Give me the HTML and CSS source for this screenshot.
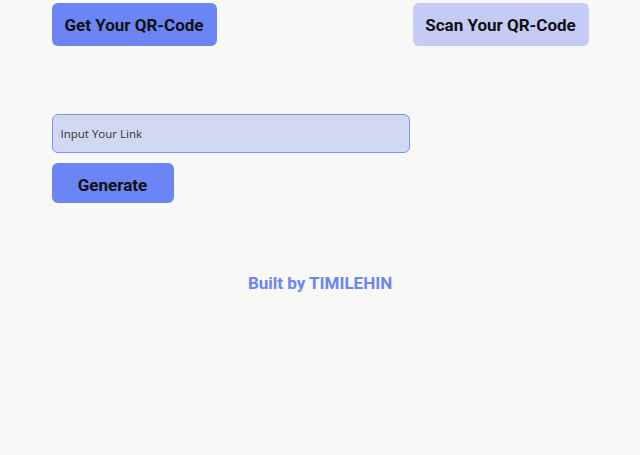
FILE: index.html
```html
<!DOCTYPE html>
<html>
<head>
<meta charset="utf-8">
<link rel="stylesheet" href="styles.css">
</head>
<body>
<div class="page">
  <nav class="tabs">
    <button class="tab tab-active">Get Your QR-Code</button>
    <button class="tab tab-light">Scan Your QR-Code</button>
  </nav>
  <section class="form">
    <input class="link-input" type="text" placeholder="Input Your Link">
    <button class="generate">Generate</button>
  </section>
  <footer class="credit">Built by TIMILEHIN</footer>
</div>
</body>
</html>
```
FILE: styles.css
```css
html, body {
  margin: 0;
  padding: 0;
  background: #f8f8f7;
  font-family: Roboto, "Liberation Sans", sans-serif;
}
.page {
  width: 537px;
  margin: 0 auto;
  padding-top: 3px;
}
.tabs {
  display: flex;
  justify-content: space-between;
}
.tab {
  height: 43px;
  border: none;
  border-radius: 6px;
  font-family: Roboto, sans-serif;
  font-weight: 700;
  font-size: 17px;
  color: #111;
  padding: 0;
}
.tab-active { background: #6b85f5; width: 165px; }
.tab-light { background: #c4cbf5; width: 176px; }
.form {
  display: flex;
  flex-direction: column;
  align-items: flex-start;
  margin-top: 68px;
}
.link-input {
  box-sizing: border-box;
  width: 358px;
  height: 39px;
  background: #d1d9f2;
  border: 1px solid #7a94f0;
  border-radius: 6px;
  padding: 0 8px;
  font-family: "Open Sans", sans-serif;
  font-size: 11.5px;
  outline: none;
}
.link-input::placeholder { color: #333; }
.generate {
  margin-top: 10px;
  width: 122px;
  height: 40px;
  border: none;
  border-radius: 6px;
  background: #6b85f5;
  font-family: Roboto, sans-serif;
  font-weight: 700;
  font-size: 17px;
  color: #111;
  padding-top: 4px;
}
.credit {
  margin-top: 70px;
  text-align: center;
  font-weight: 700;
  font-size: 17px;
  color: #6b85f5;
}
```
